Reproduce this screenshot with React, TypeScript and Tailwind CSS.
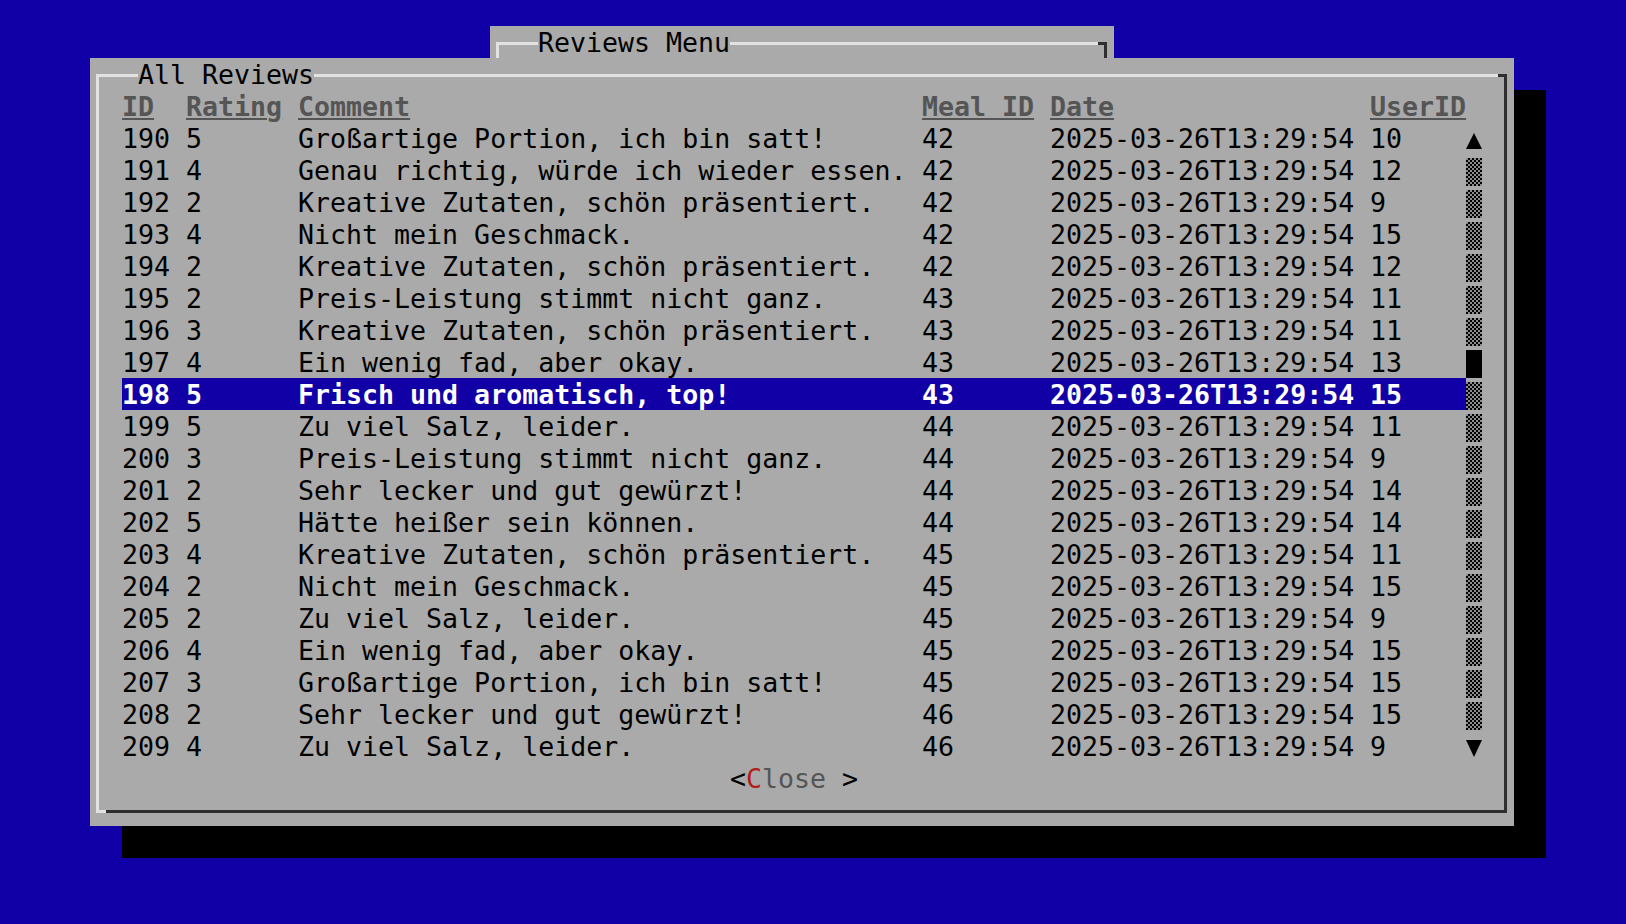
const reviews = [
  ["190", "5", "Großartige Portion, ich bin satt!", "42", "2025-03-26T13:29:54", "10"],
  ["191", "4", "Genau richtig, würde ich wieder essen.", "42", "2025-03-26T13:29:54", "12"],
  ["192", "2", "Kreative Zutaten, schön präsentiert.", "42", "2025-03-26T13:29:54", "9"],
  ["193", "4", "Nicht mein Geschmack.", "42", "2025-03-26T13:29:54", "15"],
  ["194", "2", "Kreative Zutaten, schön präsentiert.", "42", "2025-03-26T13:29:54", "12"],
  ["195", "2", "Preis-Leistung stimmt nicht ganz.", "43", "2025-03-26T13:29:54", "11"],
  ["196", "3", "Kreative Zutaten, schön präsentiert.", "43", "2025-03-26T13:29:54", "11"],
  ["197", "4", "Ein wenig fad, aber okay.", "43", "2025-03-26T13:29:54", "13"],
  ["198", "5", "Frisch und aromatisch, top!", "43", "2025-03-26T13:29:54", "15"],
  ["199", "5", "Zu viel Salz, leider.", "44", "2025-03-26T13:29:54", "11"],
  ["200", "3", "Preis-Leistung stimmt nicht ganz.", "44", "2025-03-26T13:29:54", "9"],
  ["201", "2", "Sehr lecker und gut gewürzt!", "44", "2025-03-26T13:29:54", "14"],
  ["202", "5", "Hätte heißer sein können.", "44", "2025-03-26T13:29:54", "14"],
  ["203", "4", "Kreative Zutaten, schön präsentiert.", "45", "2025-03-26T13:29:54", "11"],
  ["204", "2", "Nicht mein Geschmack.", "45", "2025-03-26T13:29:54", "15"],
  ["205", "2", "Zu viel Salz, leider.", "45", "2025-03-26T13:29:54", "9"],
  ["206", "4", "Ein wenig fad, aber okay.", "45", "2025-03-26T13:29:54", "15"],
  ["207", "3", "Großartige Portion, ich bin satt!", "45", "2025-03-26T13:29:54", "15"],
  ["208", "2", "Sehr lecker und gut gewürzt!", "46", "2025-03-26T13:29:54", "15"],
  ["209", "4", "Zu viel Salz, leider.", "46", "2025-03-26T13:29:54", "9"],
];

const SELECTED = 8;
const THUMB = 7;

const ScrollCell = ({ index }: { index: number }) => {
  if (index === 0) {
    return (
      <div className="h-[32px] w-[16px] pt-[11px]">
        <svg width="16" height="16" viewBox="0 0 16 16">
          <polygon points="8,0 16,16 0,16" fill="#000" />
        </svg>
      </div>
    );
  }
  if (index === reviews.length - 1) {
    return (
      <div className="h-[32px] w-[16px] pt-[10px]">
        <svg width="16" height="17" viewBox="0 0 16 17">
          <polygon points="0,0 16,0 8,17" fill="#000" />
        </svg>
      </div>
    );
  }
  if (index === THUMB) {
    return (
      <div className="h-[32px] w-[16px] pt-[4px]">
        <div className="h-[28px] w-[16px] bg-black" />
      </div>
    );
  }
  return (
    <div className="h-[32px] w-[16px] pt-[4px]">
      <div className="h-[28px] w-[16px] bg-[conic-gradient(#000_25%,#8c8c8c_0%_50%,#000_0%_75%,#8c8c8c_0%)] bg-[length:4px_4px]" />
    </div>
  );
};

export default function App() {
  return (
    <div className="h-[924px] w-full overflow-hidden bg-[#1100a6] pl-[10px] pt-[26px] font-['DejaVu_Sans_Mono',monospace] text-[26.6px] leading-[33px] whitespace-pre text-black">
      {/* Reviews Menu, behind */}
      <div className="ml-[480px] h-[32px] w-[624px] bg-[#aaaaaa] pl-[6px] pr-[7px] pt-[16px]">
        <div className="relative h-[16px] border-l-[3px] border-r-[3px] border-t-[3px] border-l-[#e2e2e2] border-r-[#2e2e2e] border-t-[#e2e2e2]">
          <div className="absolute right-[-3px] top-[-3px] h-[3px] w-[9px] bg-[#2e2e2e]" />
          <span className="absolute left-[39px] top-[-19px] h-[32px] bg-[#aaaaaa]">Reviews Menu</span>
        </div>
      </div>

      {/* All Reviews dialog */}
      <div className="ml-[80px] h-[768px] w-[1424px] bg-[#aaaaaa] pb-[13px] pl-[6px] pr-[7px] pt-[16px] shadow-[32px_32px_0_0_#000]">
        <div className="relative h-full border-[3px] border-b-[#2e2e2e] border-l-[#e2e2e2] border-r-[#2e2e2e] border-t-[#e2e2e2] pl-[23px] pt-[13px]">
          <div className="absolute right-[-3px] top-[-3px] h-[3px] w-[9px] bg-[#2e2e2e]" />
          <div className="absolute bottom-[-3px] left-[-3px] h-[3px] w-[10px] bg-[#e2e2e2]" />
          <span className="absolute left-[39px] top-[-19px] h-[32px] bg-[#aaaaaa]">All Reviews</span>

          {/* Header */}
          <div className="flex h-[32px] font-bold text-[#555555]">
            <div className="w-[64px]"><span className="underline decoration-2 underline-offset-[2px]">ID</span></div>
            <div className="w-[112px]"><span className="underline decoration-2 underline-offset-[2px]">Rating</span></div>
            <div className="w-[624px]"><span className="underline decoration-2 underline-offset-[2px]">Comment</span></div>
            <div className="w-[128px]"><span className="underline decoration-2 underline-offset-[2px]">Meal ID</span></div>
            <div className="w-[320px]"><span className="underline decoration-2 underline-offset-[2px]">Date</span></div>
            <div className="w-[96px]"><span className="underline decoration-2 underline-offset-[2px]">UserID</span></div>
          </div>

          {reviews.map((r, i) => (
            <div key={r[0]} className="flex h-[32px]">
              <div
                className={
                  i === SELECTED
                    ? "flex w-[1344px] bg-[#1100a6] font-bold text-white"
                    : "flex w-[1344px]"
                }
              >
                <div className="w-[64px]">{r[0]}</div>
                <div className="w-[112px]">{r[1]}</div>
                <div className="w-[624px]">{r[2]}</div>
                <div className="w-[128px]">{r[3]}</div>
                <div className="w-[320px]">{r[4]}</div>
                <div className="w-[96px]">{r[5]}</div>
              </div>
              <ScrollCell index={i} />
            </div>
          ))}

          {/* Buttons */}
          <div className="h-[32px] pl-[608px]">
            <span>&lt;</span>
            <span className="text-[#b41c1c]">C</span>
            <span className="text-[#555555]">lose</span>
            <span> &gt;</span>
          </div>
        </div>
      </div>
    </div>
  );
}
